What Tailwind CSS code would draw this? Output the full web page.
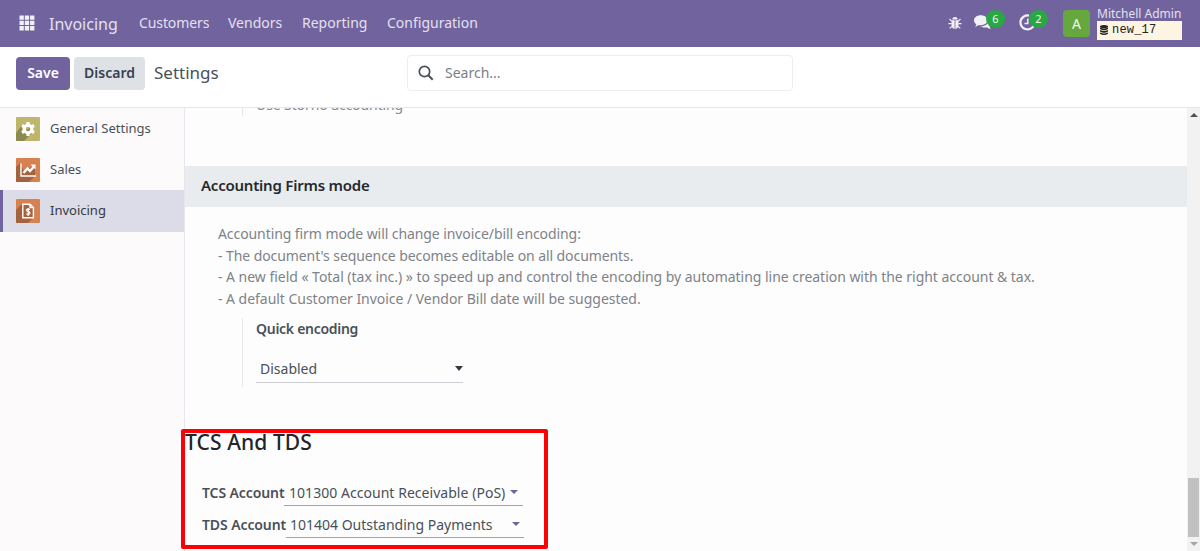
<!DOCTYPE html>
<html lang="en"><head><meta charset="utf-8"><title>Settings</title>
<script src="https://cdn.jsdelivr.net/npm/@tailwindcss/browser@4"></script></head>
<body class="w-[1200px] h-[551px] overflow-hidden bg-[#fdfdfd] font-['Noto_Sans',sans-serif] text-[14px] text-[#495057] flex flex-col">
<header class="h-[47px] shrink-0 bg-[#71639e] text-[#e4e0ee] flex items-center whitespace-nowrap">
  <svg class="ml-[19px] w-4 h-4 mr-[14px] mb-[2px] shrink-0" viewBox="0 0 16 16" fill="#f3f1f8"><path d="M0.500 0.500h4.300v4.300h-4.300zM5.800 0.500h4.300v4.300h-4.300zM11.100 0.500h4.300v4.300h-4.300zM0.500 5.800h4.300v4.300h-4.300zM5.800 5.800h4.300v4.300h-4.300zM11.100 5.800h4.300v4.300h-4.300zM0.500 11.100h4.300v4.300h-4.300zM5.800 11.100h4.300v4.300h-4.300zM11.100 11.100h4.300v4.300h-4.300z"/></svg>
  <div class="w-[90px] text-[16px] leading-[24px]">Invoicing</div>
  <nav class="flex leading-[20px] mb-px">
    <div class="w-[89px] tracking-[-0.1px]">Customers</div>
    <div class="w-[74px]">Vendors</div>
    <div class="w-[85px]">Reporting</div>
    <div class="w-[100px]">Configuration</div>
  </nav>
  <div class="ml-auto flex items-center h-[47px]">
    <svg class="w-[14px] h-[14px] mb-[2px]" viewBox="0 0 14 14" fill="#f3f1f8"><path d="M4.300 3.600a2.700 2.700 0 0 1 5.400 0zM3.600 4.300h3v8.600c-2 0-3-1.500-3-3.300zM7.400 4.300h3v5.300c0 1.800-1 3.300-3 3.300z"/><path d="M1.500 3l2.400 2.300M12.500 3l-2.400 2.300M.5 7.600h3.200M13.500 7.600h-3.200M1.700 12.400l2.400-2.300M12.300 12.400l-2.400-2.300" stroke="#f3f1f8" stroke-width="1.100"/></svg>
    <div class="relative ml-[12px] w-[32px] h-[26px] mb-[2px]">
      <svg class="absolute left-0 top-[5px] w-[18px] h-[16px]" viewBox="0 0 20 17" fill="#f3f1f8"><path d="M7.500 0C11.700 0 15 2.400 15 5.500S11.700 11 7.500 11c-.8 0-1.500-.1-2.200-.2C4.200 11.700 2.700 12.500 1 12.600c.9-.8 1.500-1.600 1.600-2.600C1 9 0 7.300 0 5.500 0 2.400 3.300 0 7.500 0z"/><path d="M16.300 4.500c2 .9 3.200 2.400 3.200 4.200 0 1.500-.9 2.900-2.300 3.800.2 1 .8 1.900 1.600 2.600-1.700-.1-3.100-.8-4.200-1.700-3 .5-5.700-.1-7.300-1.300 5 .2 9.300-2.900 9-7.600z"/></svg>
      <span class="absolute left-[12px] top-0 w-[19px] h-[18px] rounded-full bg-[#28a745] text-[#f0fbf2] text-[11px] leading-[17px] text-center">6</span>
    </div>
    <div class="relative ml-[13px] w-[32px] h-[26px] mb-[2px]">
      <svg class="absolute left-0 top-[4px] w-[17px] h-[17px]" viewBox="0 0 17 17" fill="none" stroke="#f3f1f8"><path d="M10 1.600A7 7 0 1 0 15 11" stroke-width="2.200"/><path d="M8.800 4.500v5H5.500" stroke-width="1.500"/></svg>
      <span class="absolute left-[10px] top-0 w-[19px] h-[18px] rounded-full bg-[#28a745] text-[#f0fbf2] text-[11px] leading-[17px] text-center">2</span>
    </div>
    <div class="ml-[12px] w-[27px] h-[27px] rounded-[4px] bg-[#66a83e] text-[#f3f8ee] text-center text-[14px] leading-[28px]">A</div>
    <div class="ml-[7px] mr-[18px] w-[85px] flex flex-col">
      <div class="h-[14px] text-[12px] leading-[14px]">Mitchell Admin</div>
      <div class="h-[19px] mb-px bg-[#fdf4e1] text-[#222] flex items-center font-['Liberation_Mono',monospace] text-[12px] tracking-[0.2px]">
        <svg class="ml-[3px] mr-[4px] mb-px w-[8px] h-[10px]" viewBox="0 0 8 10" fill="#222"><ellipse cx="4" cy="1.500" rx="4" ry="1.500"/><path d="M0 2.600q4 2 8 0v1.500q-4 2.400-8 0zM0 5q4 2 8 0v1.500q-4 2.400-8 0zM0 7.400q4 2 8 0v1.300q-4 2.400-8 0z"/></svg>
        <span class="pb-px">new_17</span>
      </div>
    </div>
  </div>
</header>
<section class="h-[61px] shrink-0 border-b border-[#e6e6ec] bg-white flex items-center pb-[8px] whitespace-nowrap">
  <button class="ml-4 w-[54px] h-[33px] rounded-[4px] bg-[#71639e] text-white font-semibold pb-px">Save</button>
  <button class="ml-[4px] w-[71px] h-[33px] rounded-[4px] bg-[#dee2e6] text-[#374151] font-semibold pb-px">Discard</button>
  <div class="ml-[9px] w-[253px] text-[17px] leading-[24px]">Settings</div>
  <div class="w-[386px] h-[36px] rounded-[4px] border border-[#eceef0] flex items-center">
    <svg class="ml-[10px] mr-[11px] w-4 h-4" viewBox="0 0 16 16" fill="none" stroke="#495057"><circle cx="6.500" cy="6.500" r="5.200" stroke-width="1.700"/><path d="M10.300 10.300l4.400 4.400" stroke-width="2"/></svg>
    <span class="text-[#7a8087] pb-px">Search...</span>
  </div>
</section>
<main class="flex-1 min-h-0 flex whitespace-nowrap">
  <aside class="w-[185px] shrink-0 border-r border-[#e9e4ee] bg-[#fdfafc] text-[13px]">
    <div class="h-[41px] flex items-center pl-4 gap-[10px]">
      <svg class="w-6 h-6" viewBox="0 0 24 24"><rect width="24" height="24" rx="1" fill="#bdb66b"/><path d="M7 16L17 8l0 7-9 9H1q-1 0-1-1v-7l6-8z" fill="#8d8952"/><circle cx="12" cy="12" r="3.800" fill="none" stroke="#fff" stroke-width="3.200"/><path d="M12 5v2.500M12 16.500V19M5.900 8.500l2.200 1.200M15.900 14.300l2.200 1.200M5.900 15.500l2.200-1.200M15.900 9.700l2.200-1.200" stroke="#fff" stroke-width="3.200"/></svg>
      <span>General Settings</span>
    </div>
    <div class="h-[41px] flex items-center pl-4 gap-[10px]">
      <svg class="w-6 h-6" viewBox="0 0 24 24"><rect width="24" height="24" rx="1" fill="#d6814f"/><path d="M4 5L0 9v14q0 1 1 1h12l6-6 0-11-11 6z" fill="#a4633f"/><path d="M5 5.500V18h15" fill="none" stroke="#fff" stroke-width="1.400"/><path d="M7.500 15l4-4.500 2.500 2.500 4-4.500" fill="none" stroke="#fff" stroke-width="2.300"/><path d="M14.500 6.500H19.500V11.500z" fill="#fff"/></svg>
      <span>Sales</span>
    </div>
    <div class="h-[42px] flex items-center pl-[13px] pb-px gap-[10px] bg-[#dcdbe8] border-l-[3px] border-[#71639e] text-[#343a40]">
      <svg class="w-6 h-6" viewBox="0 0 24 24"><rect width="24" height="24" rx="1" fill="#d6814f"/><path d="M6 5L0 11v12q0 1 1 1h11l6-6V8z" fill="#a4633f"/><path d="M6.800 5.200h7.200l3.400 3.400v10.200H6.800zM14 5.200v3.400h3.400" fill="none" stroke="#fff" stroke-width="1.400"/><path d="M14 10.400q-3.600-1-3.600.9 0 1.200 1.800 1.300 1.800.1 1.800 1.400 0 1.800-3.700.8M12.200 9v8" fill="none" stroke="#fff" stroke-width="1.200"/></svg>
      <span>Invoicing</span>
    </div>
  </aside>
  <div class="w-[1002px] flex flex-col shrink-0">
    <div class="h-[58px] overflow-hidden"><div class="ml-[57px] h-[8px] border-l border-[#e5e7ea] pl-[13px] text-[#868b91]"><span class="block -translate-y-[13px] leading-[20px] tracking-[-0.1px]">Use Storno accounting</span></div></div>
    <h2 class="h-[41px] shrink-0 bg-[#e9ecef] pl-[16px] leading-[39px] text-[15px] tracking-[-0.22px] font-semibold text-[#25292d]">Accounting Firms mode</h2>
    <div class="pl-[33px] pt-[16px] leading-[21.700px] text-[#7d8389]">
      <p class="tracking-[-0.08px]">Accounting firm mode will change invoice/bill encoding:</p>
      <p class="tracking-[-0.08px]">- The document's sequence becomes editable on all documents.</p>
      <p class="tracking-[-0.03px]">- A new field « Total (tax inc.) » to speed up and control the encoding by automating line creation with the right account &amp; tax.</p>
      <p class="tracking-[-0.03px]">- A default Customer Invoice / Vendor Bill date will be suggested.</p>
    </div>
    <div class="ml-[57px] mt-[8px] h-[69px] border-l border-[#e5e7ea] pl-[13px]">
      <h3 class="leading-[22px] font-semibold tracking-[-0.28px]">Quick encoding</h3>
      <div class="mt-[15px] w-[207px] h-[28px] border-b border-[#ccd0d4] pl-[4px] flex items-center"><span>Disabled</span><span class="ml-auto border-x-[4px] border-x-transparent border-t-[5px] border-t-[#343a40]"></span></div>
    </div>
    <div class="mt-[42px] -ml-[4px] w-[367px] h-[120px] shrink-0 border-[4px] border-[#fb0007] rounded-[2px] flex flex-col">
      <h2 class="text-[21px] leading-[24px] -mt-[3px] font-medium tracking-[0.1px] text-[#212529]">TCS And TDS</h2>
      <div class="mt-[26px] ml-[17px] flex h-[26px] leading-[25px]"><div class="w-[82px] font-semibold tracking-[-0.1px]">TCS Account</div><div class="w-[239px] border-b border-[#a0a2b8] pl-[5px] flex items-center tracking-[0.04px]"><span>101300 Account Receivable (PoS)</span><span class="ml-auto mr-[5px] border-x-[4px] border-x-transparent border-t-[4px] border-t-[#71639e]"></span></div></div>
      <div class="mt-[6px] ml-[17px] flex h-[26px] leading-[25px]"><div class="w-[84px] font-semibold tracking-[-0.1px]">TDS Account</div><div class="w-[238px] border-b border-[#a0a2b8] pl-[4px] flex items-center"><span>101404 Outstanding Payments</span><span class="ml-auto mr-[4px] border-x-[4px] border-x-transparent border-t-[4px] border-t-[#71639e]"></span></div></div>
    </div>
  </div>
  <div class="w-[13px] shrink-0 bg-[#f1f2f1] flex flex-col items-center">
    <span class="mt-[5px] border-x-[4px] border-x-transparent border-b-[4px] border-b-[#505050]"></span>
    <div class="mt-auto w-[11px] h-[59px] bg-[#c1c1c1]"></div>
    <span class="mt-[5px] mb-[5px] border-x-[4px] border-x-transparent border-t-[4px] border-t-[#a3a3a3]"></span>
  </div>
</main>
</body></html>
